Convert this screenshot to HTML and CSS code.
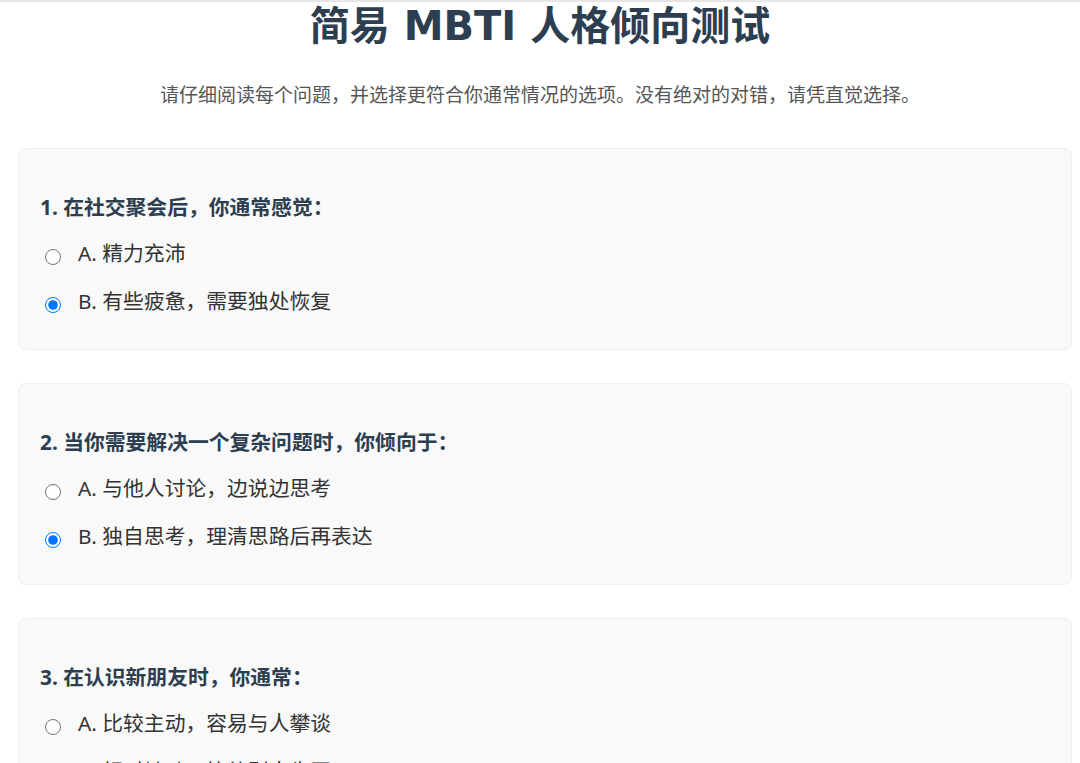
FILE: index.html
```html
<!DOCTYPE html>
<html lang="zh-CN">
<head>
<meta charset="utf-8">
<title>简易 MBTI 人格倾向测试</title>
<link rel="stylesheet" href="styles.css">
</head>
<body>
<div class="container">
  <h1 class="title">简易<span class="latin"> MBTI </span>人格倾向测试</h1>
  <p class="intro">请仔细阅读每个问题，并选择更符合你通常情况的选项。没有绝对的对错，请凭直觉选择。</p>

  <div class="question">
    <h3 class="q-text">1. 在社交聚会后，你通常感觉：</h3>
    <label class="option"><input type="radio" name="q1" value="A"><span>A. 精力充沛</span></label>
    <label class="option"><input type="radio" name="q1" value="B" checked><span>B. 有些疲惫，需要独处恢复</span></label>
  </div>

  <div class="question">
    <h3 class="q-text">2. 当你需要解决一个复杂问题时，你倾向于：</h3>
    <label class="option"><input type="radio" name="q2" value="A"><span>A. 与他人讨论，边说边思考</span></label>
    <label class="option"><input type="radio" name="q2" value="B" checked><span>B. 独自思考，理清思路后再表达</span></label>
  </div>

  <div class="question">
    <h3 class="q-text">3. 在认识新朋友时，你通常：</h3>
    <label class="option"><input type="radio" name="q3" value="A"><span>A. 比较主动，容易与人攀谈</span></label>
    <label class="option"><input type="radio" name="q3" value="B"><span>B. 相对被动，等待别人先开口</span></label>
  </div>
</div>
</body>
</html>
```

FILE: styles.css
```css
html, body {
  margin: 0;
  padding: 0;
  background: #ffffff;
}

body {
  border-top: 2px solid #e6e6e6;
  font-family: "Noto Sans", "Noto Sans CJK SC", sans-serif;
  color: #333333;
}

.container {
  margin: 0 8px;
}

.title {
  margin: 0;
  text-align: center;
  font-family: "Noto Sans", "Noto Sans CJK SC", sans-serif;
  font-size: 40px;
  line-height: 46px;
  font-weight: 700;
  color: #2c3e50;
}

.title .latin {
  font-family: "DejaVu Sans", "Noto Sans", sans-serif;
}

.intro {
  margin: 32px 0 39px;
  text-align: center;
  font-size: 19px;
  line-height: 28px;
  color: #555555;
}

.question {
  margin: 0 0 33px 10px;
  padding: 43px 21px 15px;
  background: #f9f9f9;
  border: 1px solid #eeeeee;
  border-radius: 8px;
}

.q-text {
  margin: 0 0 15px;
  font-size: 20.8px;
  line-height: 31px;
  font-weight: 700;
  color: #2c3e50;
}

.option {
  display: block;
  margin: 0 0 18px;
  font-size: 20.8px;
  line-height: 30px;
  color: #333333;
  cursor: pointer;
}

.option input {
  width: 16px;
  height: 16px;
  margin: 0 17px 0 5px;
  vertical-align: -4px;
}
```
